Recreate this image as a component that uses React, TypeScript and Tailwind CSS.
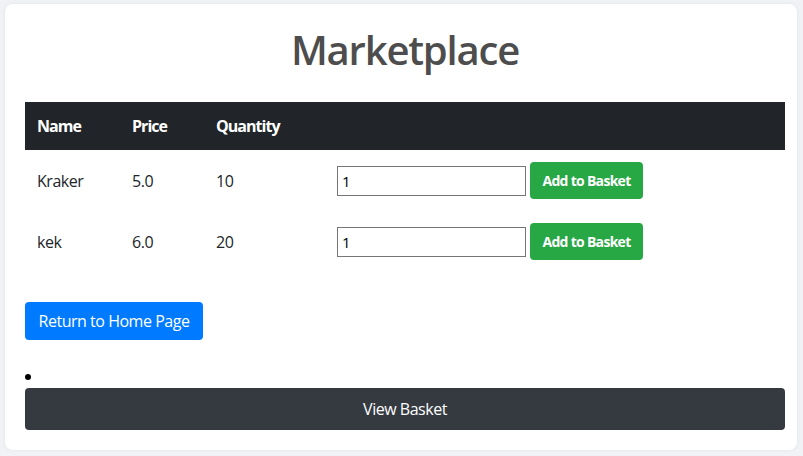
export default function App() {
  const items = [
    { name: "Kraker", price: "5.0", quantity: 10 },
    { name: "kek", price: "6.0", quantity: 20 },
  ];

  return (
    <div
      className="min-h-[456px] overflow-hidden bg-[#f0f2f5] pt-[4px] pl-[5px] pb-[6px] tracking-[-0.03em]"
      style={{ fontFamily: '"Open Sans", "Noto Sans", sans-serif' }}
    >
      <div className="h-[446px] w-[792px] rounded-[8px] bg-white pl-[20px] pr-[12px] pt-[22px] shadow-[0_0_4px_rgba(0,0,0,0.06)]">
        <h1 className="mb-[28px] text-center text-[40px] leading-[48px] font-semibold tracking-[-0.03em] text-[#4d4d4d]">
          Marketplace
        </h1>

        {/* Items */}
        <table className="w-[760px] border-collapse text-[16px] text-[#212529]">
          <thead>
            <tr className="bg-[#212529] text-white tracking-[-0.06em]">
              <th className="w-[95px] px-[12px] py-[12px] text-left leading-[24px] font-bold">Name</th>
              <th className="w-[84px] px-[12px] py-[12px] text-left leading-[24px] font-bold">Price</th>
              <th className="w-[121px] px-[12px] py-[12px] text-left leading-[24px] font-bold">Quantity</th>
              <th className="px-[12px] py-[12px]"></th>
            </tr>
          </thead>
          <tbody>
            {items.map((item, index) => (
              <tr key={index}>
                <td className="px-[12px] py-[12px] align-middle leading-[24px]">{item.name}</td>
                <td className="px-[12px] py-[12px] align-middle leading-[24px]">{item.price}</td>
                <td className="px-[12px] py-[12px] align-middle leading-[24px]">{item.quantity}</td>
                <td className="px-[12px] py-[12px] align-middle">
                  <div className="flex items-center gap-[4px]">
                    <input
                      type="number"
                      defaultValue={1}
                      className="h-[30px] w-[189px] border border-[#767676] px-[4px] text-[15px] text-black outline-none [appearance:textfield]"
                    />
                    <button className="h-[37px] w-[113px] rounded-[4px] bg-[#28a745] text-[14px] font-bold tracking-[-0.05em] text-white">
                      Add to Basket
                    </button>
                  </div>
                </td>
              </tr>
            ))}
          </tbody>
        </table>

        <button className="mt-[30px] h-[38px] w-[178px] rounded-[4px] bg-[#007bff] text-[16px] text-white">
          Return to Home Page
        </button>

        <ul className="mt-[24px] list-inside list-disc text-black">
          <li className="leading-[24px]">
            <button className="block h-[42px] w-full rounded-[4px] bg-[#343a40] text-[16px] text-white">
              View Basket
            </button>
          </li>
        </ul>
      </div>
    </div>
  );
}
